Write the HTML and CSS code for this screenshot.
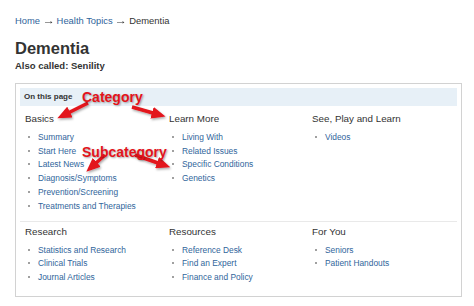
FILE: index.html
```html
<!DOCTYPE html>
<html lang="en">
<head>
  <meta charset="UTF-8">
  <title>Dementia</title>
  <link rel="stylesheet" href="styles.css">
</head>
<body>
  <div class="breadcrumb">
    <a href="#">Home</a> <span class="sep">&rarr;</span> <a href="#">Health Topics</a> <span class="sep">&rarr;</span> Dementia
  </div>
  <h1 class="page-title">Dementia</h1>
  <div class="also-called">Also called: Senility</div>

  <div class="toc-box">
    <div class="toc-bar">On this page</div>

    <div class="toc-row">
      <div class="toc-col">
        <h3>Basics</h3>
        <ul>
          <li><a href="#">Summary</a></li>
          <li><a href="#">Start Here</a></li>
          <li><a href="#">Latest News</a></li>
          <li><a href="#">Diagnosis/Symptoms</a></li>
          <li><a href="#">Prevention/Screening</a></li>
          <li><a href="#">Treatments and Therapies</a></li>
        </ul>
      </div>
      <div class="toc-col">
        <h3>Learn More</h3>
        <ul>
          <li><a href="#">Living With</a></li>
          <li><a href="#">Related Issues</a></li>
          <li><a href="#">Specific Conditions</a></li>
          <li><a href="#">Genetics</a></li>
        </ul>
      </div>
      <div class="toc-col">
        <h3>See, Play and Learn</h3>
        <ul>
          <li><a href="#">Videos</a></li>
        </ul>
      </div>
    </div>

    <div class="toc-row toc-row-bottom">
      <div class="toc-col">
        <h3>Research</h3>
        <ul>
          <li><a href="#">Statistics and Research</a></li>
          <li><a href="#">Clinical Trials</a></li>
          <li><a href="#">Journal Articles</a></li>
        </ul>
      </div>
      <div class="toc-col">
        <h3>Resources</h3>
        <ul>
          <li><a href="#">Reference Desk</a></li>
          <li><a href="#">Find an Expert</a></li>
          <li><a href="#">Finance and Policy</a></li>
        </ul>
      </div>
      <div class="toc-col">
        <h3>For You</h3>
        <ul>
          <li><a href="#">Seniors</a></li>
          <li><a href="#">Patient Handouts</a></li>
        </ul>
      </div>
    </div>

    <!-- annotation layer -->
    <svg class="arrows" width="447" height="214" viewBox="0 0 447 214">
      <defs>
        <filter id="shadow" x="-20%" y="-20%" width="140%" height="140%">
          <feDropShadow dx="1" dy="1.5" stdDeviation="1" flood-color="#000" flood-opacity="0.35"/>
        </filter>
        <marker id="head" markerUnits="userSpaceOnUse" markerWidth="14" markerHeight="12" refX="1" refY="6" orient="auto">
          <path d="M0,0 L14,6 L0,12 z" fill="#e3131b"/>
        </marker>
      </defs>
      <g stroke="#e3131b" stroke-width="3.5" filter="url(#shadow)" marker-end="url(#head)">
        <line x1="73" y1="20" x2="54" y2="29.5"/>
        <line x1="117" y1="24" x2="138" y2="30"/>
        <line x1="90" y1="72" x2="81" y2="80"/>
        <line x1="120" y1="72" x2="143" y2="80"/>
      </g>
    </svg>
    <span class="note note-category">Category</span>
    <span class="note note-sub">Subcategory</span>
  </div>
</body>
</html>
```

FILE: styles.css
```css
body {
  margin: 0;
  padding: 14px 15px 0;
  background: #fff;
  color: #333;
  font-family: "Liberation Sans", Arial, sans-serif;
}

a {
  color: #30659b;
  text-decoration: none;
}

.breadcrumb {
  font-size: 9.4px;
  line-height: 14px;
  color: #333;
}

.breadcrumb .sep {
  display: inline-block;
  transform: scaleX(1.3);
  margin: 0 1px;
}

.page-title {
  margin: 10px 0 0;
  font-size: 16.5px;
  line-height: 21px;
  font-weight: bold;
  color: #333;
}

.also-called {
  font-size: 9.5px;
  line-height: 13px;
  font-weight: bold;
  color: #333;
}

.toc-box {
  position: relative;
  box-sizing: border-box;
  width: 447px;
  margin-top: 11px;
  padding: 4px 4px 12px;
  border: 1px solid #d2d2d2;
}

.toc-bar {
  height: 18px;
  line-height: 18px;
  padding-left: 4px;
  background: #e7f0f7;
  font-size: 8px;
  font-weight: bold;
  color: #333;
}

.toc-row {
  display: grid;
  grid-template-columns: 144px 143px 1fr;
  padding: 7px 0 8px 5px;
}

.toc-row-bottom {
  padding-top: 4px;
  padding-bottom: 0;
  border-top: 1px solid #e9e9e9;
}

.toc-col h3 {
  margin: 0 0 5px;
  font-size: 9.8px;
  line-height: 12px;
  font-weight: normal;
  color: #333;
}

.toc-col ul {
  margin: 0;
  padding: 0;
  list-style: none;
}

.toc-col li {
  display: flex;
  align-items: center;
  gap: 8px;
  height: 13.8px;
  font-size: 8.4px;
  padding-left: 3px;
}

.toc-col li::before {
  content: "";
  width: 2px;
  height: 2px;
  background: #a0a0a0;
}

.arrows {
  position: absolute;
  left: -1px;
  top: -1px;
  pointer-events: none;
}

.note {
  position: absolute;
  left: 66px;
  font-size: 14px;
  line-height: 16px;
  font-weight: bold;
  color: #e3131b;
  text-shadow: 1px 1px 2px rgba(0, 0, 0, 0.35);
  white-space: nowrap;
}

.note-category {
  top: 5px;
}

.note-sub {
  top: 60px;
}
```
